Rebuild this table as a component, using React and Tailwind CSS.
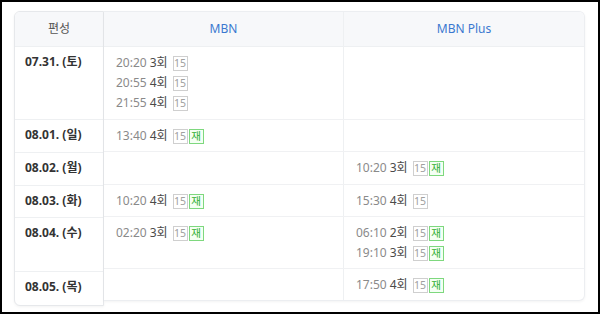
import React from 'react';

const days = [
  { date: '07.31. (토)', mbn: [['20:20', '3회', false], ['20:55', '4회', false], ['21:55', '4회', false]], plus: [] },
  { date: '08.01. (일)', mbn: [['13:40', '4회', true]], plus: [] },
  { date: '08.02. (월)', mbn: [], plus: [['10:20', '3회', true]] },
  { date: '08.03. (화)', mbn: [['10:20', '4회', true]], plus: [['15:30', '4회', false]] },
  { date: '08.04. (수)', mbn: [['02:20', '3회', true]], plus: [['06:10', '2회', true], ['19:10', '3회', true]] },
  { date: '08.05. (목)', mbn: [], plus: [['17:50', '4회', true]] },
];

const leftHeights = ['h-[73px]', 'h-[33px]', 'h-[33px]', 'h-[32px]', 'h-[54px]', 'h-[33px]'];
const rightHeights = ['h-[73px]', 'h-[32px]', 'h-[33px]', 'h-[32px]', 'h-[52px]', 'h-[31px]'];

const Entry = ({ time, ep, re }) => (
  <div className="flex items-center h-5 leading-5">
    <span className="text-[#8a8a8a]">{time}</span>
    <span className="ml-[3px] text-[#4a4a4a]">{ep}</span>
    <span className="ml-[5px] flex items-center justify-center w-[15px] h-[15px] border border-[#cfcfcf] text-[#a0a0a0] text-[10.5px] leading-none">15</span>
    {re && (
      <span className="ml-[1px] flex items-center justify-center w-[15px] h-[15px] border border-[#7ed87e] bg-[#f4fff4] text-[#2fae2f] text-[10.5px] leading-none">재</span>
    )}
  </div>
);

const App = () => {
  return (
    <div
      className="w-[600px] h-[314px] border-2 border-black bg-white pl-[12px] pt-[9px] text-[12px]"
      style={{ fontFamily: '"Noto Sans", "Noto Sans CJK KR", sans-serif' }}
    >
      <div className="flex w-[571px] items-start">
        {/* date column */}
        <div className="w-[90px] border border-[#e6e8eb] rounded-l-[6px] overflow-hidden bg-white shadow-[0_1px_3px_rgba(0,0,0,0.05)]">
          <div className="h-[35px] bg-[#f7f8fa] border-b border-[#eef0f2] flex items-center justify-center text-[#555]">
            편성
          </div>
          {days.map((d, i) => (
            <div key={d.date} className={`${leftHeights[i]} ${i < days.length - 1 ? 'border-b border-[#eef0f2]' : ''} pl-[10px] pt-[5px] leading-5 font-bold text-[#333]`}>
              {d.date}
            </div>
          ))}
        </div>
        {/* channels */}
        <div className="flex-1 border border-l-0 border-[#eceef1] rounded-r-[6px] overflow-hidden bg-white shadow-[0_1px_3px_rgba(0,0,0,0.05)]">
          <div className="grid grid-cols-2 h-[35px] bg-[#f7f8fa] border-b border-[#eef0f2] text-[#3a78d0]">
            <div className="flex items-center justify-center border-r border-[#eef0f2]">MBN</div>
            <div className="flex items-center justify-center">MBN Plus</div>
          </div>
          {days.map((d, i) => (
            <div key={d.date} className={`${rightHeights[i]} grid grid-cols-2 ${i < days.length - 1 ? 'border-b border-[#f0f1f3]' : ''}`}>
              <div className="border-r border-[#eef0f2] pl-[12px] pt-[6px]">
                {d.mbn.map(([t, e, r]) => <Entry key={t} time={t} ep={e} re={r} />)}
              </div>
              <div className="pl-[12px] pt-[6px]">
                {d.plus.map(([t, e, r]) => <Entry key={t} time={t} ep={e} re={r} />)}
              </div>
            </div>
          ))}
        </div>
      </div>
    </div>
  );
};

export default App;
